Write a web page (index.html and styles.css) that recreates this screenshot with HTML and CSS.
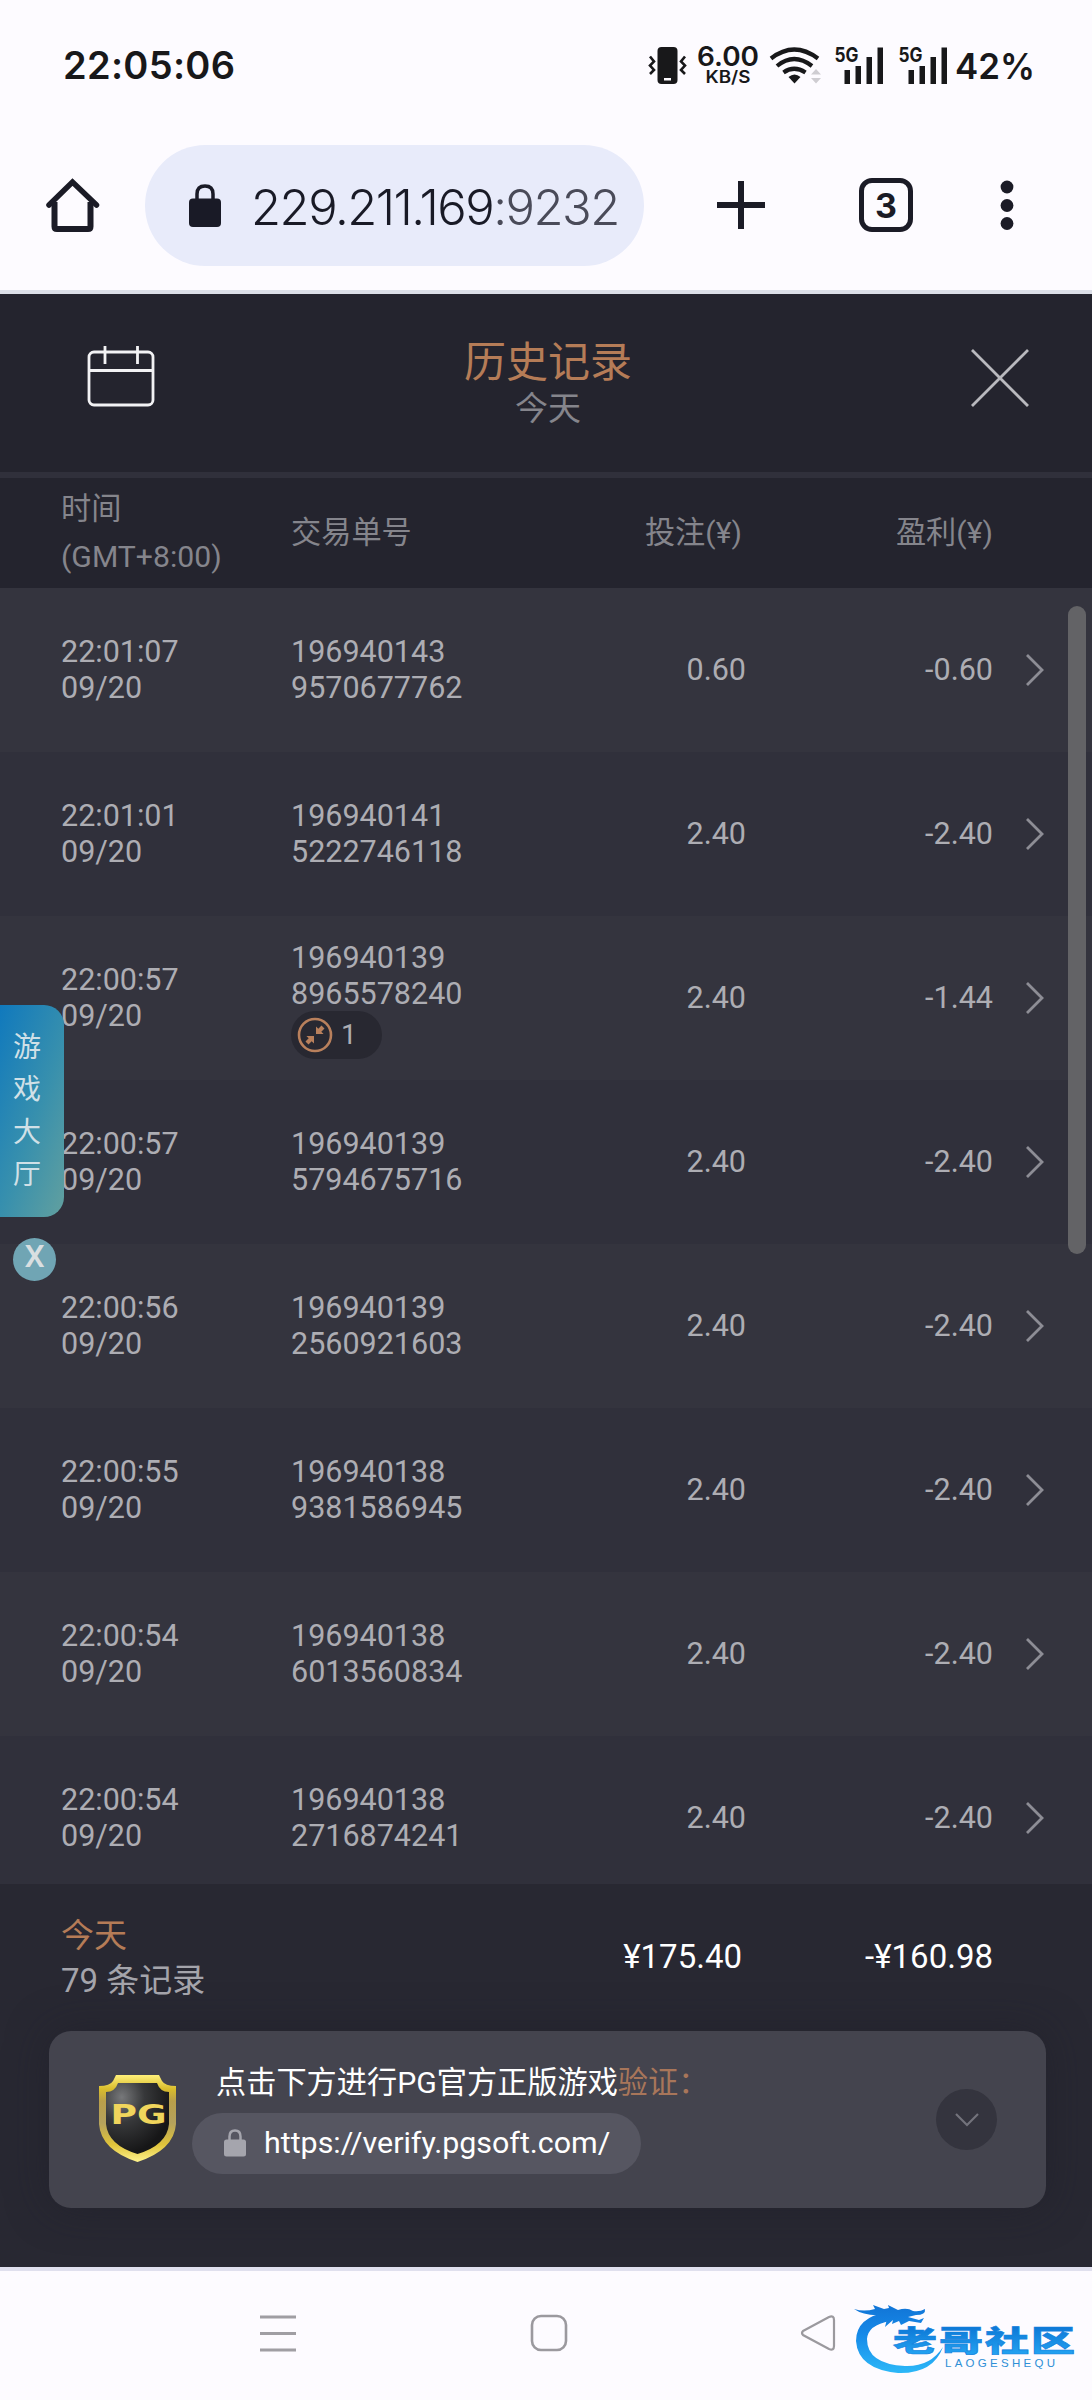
FILE: index.html
```html
<!DOCTYPE html>
<html lang="zh-CN">
<head>
<meta charset="utf-8">
<title>历史记录</title>
<link rel="stylesheet" href="styles.css">
</head>
<body>
<svg class="defs" width="0" height="0" aria-hidden="true">
  <symbol id="chev" viewBox="0 0 20 34"><path d="M2 2 17 17 2 32" fill="none" stroke="#8d8d95" stroke-width="2.800"/></symbol>
</svg>
<div class="phone">
  <header class="status">
    <span class="clock">22:05:06</span>
    <svg class="status-icons" width="392" height="50" viewBox="646 40 392 50">
      <g fill="#18181a">
        <rect x="657.500" y="47" width="20" height="37" rx="4"/>
        <rect x="664" y="78" width="7" height="2.500" fill="#fdfbff"/>
        <path d="M650 56.500l4 5-4 4 4 4.500-4 4M685 56.500l-4 5 4 4-4 4.500 4 4" fill="none" stroke="#18181a" stroke-width="2.600"/>
        <text x="697" y="66" font-size="27" font-weight="600" textLength="62" lengthAdjust="spacingAndGlyphs">6.00</text>
        <text x="705.500" y="83" font-size="17" font-weight="600" textLength="45" lengthAdjust="spacingAndGlyphs">KB/S</text>
        <g fill="none" stroke="#18181a" stroke-width="4.200">
          <path d="M771 58.500Q794 40.500 818 58.500"/><path d="M777 66Q794 52 812 66"/><path d="M783.500 72.500Q794 65 805.500 72.500"/>
        </g>
        <path d="M788.500 77q6-5 12 0l-6 6.500z"/>
        <path d="M811 74.500l5-5.500 5 5.500zM811 78h10l-5 5.500z" fill="#cfcdd2"/>
        <text x="834.500" y="62" font-size="20" font-weight="700" textLength="24" lengthAdjust="spacingAndGlyphs">5G</text>
        <path d="M844.500 70h5.500v14h-5.500zM855.500 66h5.500v18h-5.500zM866.500 57h5.500v27h-5.500zM877.500 47.500h5.500v36.500h-5.500z"/>
        <text x="898.500" y="62" font-size="20" font-weight="700" textLength="24" lengthAdjust="spacingAndGlyphs">5G</text>
        <path d="M908.500 70h5.500v14h-5.500zM919.500 66h5.500v18h-5.500zM930.500 57h5.500v27h-5.500zM941.500 47.500h5.500v36.500h-5.500z"/>
        <text x="955" y="79" font-size="36" font-weight="600" textLength="80" lengthAdjust="spacingAndGlyphs">42%</text>
      </g>
    </svg>
  </header>

  <nav class="browser">
    <svg class="home" width="56" height="56" viewBox="0 0 56 56"><g fill="none" stroke="#1b1b26" stroke-width="6"><path d="M9.500 25V49.500Q9.500 52 12 52H43Q45.500 52 45.500 49.500V25"/><path d="M4 28 27.500 5 51.500 28" stroke-width="5.500" stroke-linecap="round"/></g></svg>
    <div class="url">
      <svg width="34" height="44" viewBox="0 0 34 44"><path d="M9 18v-8q0-8 8-8t8 8v8" fill="none" stroke="#191a26" stroke-width="3.500"/><rect x="1" y="14.500" width="32" height="28.500" rx="4" fill="#191a26"/></svg>
      <span class="url-text">229.211.169<span class="port">:9232</span></span>
    </div>
    <svg class="plus" width="50" height="50" viewBox="0 0 50 50"><path d="M25 1v48M1 25h48" stroke="#1b1b26" stroke-width="6"/></svg>
    <div class="tabs">3</div>
    <svg class="dots" width="14" height="52" viewBox="0 0 14 52"><g fill="#1b1b26"><circle cx="7" cy="8" r="6.400"/><circle cx="7" cy="26.500" r="6.400"/><circle cx="7" cy="44.500" r="6.400"/></g></svg>
  </nav>

  <main class="app">
    <div class="title-bar">
      <svg class="cal" width="68" height="62" viewBox="0 0 68 62"><g fill="none" stroke="#f2f2f4" stroke-width="2.800"><rect x="2" y="7" width="64" height="53" rx="5"/><path d="M2 25.500h64M18 1v18M50.500 1v18"/></g></svg>
      <div class="titles"><h1>历史记录</h1><p>今天</p></div>
      <svg class="close" width="58" height="58" viewBox="0 0 58 58"><path d="M1 1 57 57M57 1 1 57" stroke="#b9b9be" stroke-width="2.800"/></svg>
    </div>
    <div class="cols heads">
      <div>时间<br>(GMT+8:00)</div><div>交易单号</div><div class="num">投注(¥)</div><div class="num">盈利(¥)</div>
    </div>
    <div class="list">
      <div class="cols row"><div>22:01:07<br>09/20</div><div>196940143<br>9570677762</div><div class="num bet">0.60</div><div class="num">-0.60</div><svg class="chev"><use href="#chev"/></svg></div>
      <div class="cols row"><div>22:01:01<br>09/20</div><div>196940141<br>5222746118</div><div class="num bet">2.40</div><div class="num">-2.40</div><svg class="chev"><use href="#chev"/></svg></div>
      <div class="cols row"><div>22:00:57<br>09/20</div><div class="tagged">196940139<br>8965578240
        <div class="badge"><svg width="36" height="36" viewBox="0 0 36 36"><circle cx="18" cy="18" r="16" fill="none" stroke="#b9805c" stroke-width="2.600"/><path d="M19 17V9.500l2.300 2.300L24.500 8.500l3 3-3.200 3.200L26.600 17zM17 19v7.500l-2.300-2.300L11.500 27.500l-3-3 3.200-3.200L9.400 19z" fill="#b9805c"/></svg><span>1</span></div></div><div class="num bet">2.40</div><div class="num">-1.44</div><svg class="chev"><use href="#chev"/></svg></div>
      <div class="cols row"><div>22:00:57<br>09/20</div><div>196940139<br>5794675716</div><div class="num bet">2.40</div><div class="num">-2.40</div><svg class="chev"><use href="#chev"/></svg></div>
      <div class="cols row"><div>22:00:56<br>09/20</div><div>196940139<br>2560921603</div><div class="num bet">2.40</div><div class="num">-2.40</div><svg class="chev"><use href="#chev"/></svg></div>
      <div class="cols row"><div>22:00:55<br>09/20</div><div>196940138<br>9381586945</div><div class="num bet">2.40</div><div class="num">-2.40</div><svg class="chev"><use href="#chev"/></svg></div>
      <div class="cols row"><div>22:00:54<br>09/20</div><div>196940138<br>6013560834</div><div class="num bet">2.40</div><div class="num">-2.40</div><svg class="chev"><use href="#chev"/></svg></div>
      <div class="cols row"><div>22:00:54<br>09/20</div><div>196940138<br>2716874241</div><div class="num bet">2.40</div><div class="num">-2.40</div><svg class="chev"><use href="#chev"/></svg></div>
      <div class="scrollbar"></div>
    </div>
    <div class="footer">
      <div class="cols sums">
        <div class="count"><span class="accent">今天</span><br>79 条记录</div><div class="num total">¥175.40</div><div class="num total">-¥160.98</div>
      </div>
      <section class="verify">
        <svg class="shield" width="80" height="90" viewBox="0 0 80 90">
          <defs>
            <linearGradient id="gold" x1="0" y1="0" x2="0" y2="1"><stop offset="0" stop-color="#fff07a"/><stop offset=".16" stop-color="#d9bd2c"/><stop offset=".3" stop-color="#b99f4a"/><stop offset=".55" stop-color="#b5a25c"/><stop offset=".8" stop-color="#e0c43a"/><stop offset="1" stop-color="#fff38e"/></linearGradient>
            <radialGradient id="coal" cx=".25" cy=".2" r=".8"><stop offset="0" stop-color="#77787a"/><stop offset=".45" stop-color="#37383a"/><stop offset="1" stop-color="#161617"/></radialGradient>
          </defs>
          <path d="M18 1H61L64 7Q67 12 78 12V50Q76 76 39.500 88Q3 76 1 50V12Q12 12 15 7Z" fill="url(#gold)"/>
          <path d="M20 9H59Q62 18 71 18V50Q69 71 39.500 80Q10 71 8 50V18Q17 18 20 9Z" fill="url(#coal)"/>
          <text x="12.500" y="50" textLength="56" lengthAdjust="spacingAndGlyphs">PG</text>
        </svg>
        <div class="verify-body">
          <div class="verify-title">点击下方进行PG官方正版游戏<span class="accent">验证：</span></div>
          <div class="link"><svg width="24" height="28" viewBox="0 0 24 28"><path d="M6.500 12V7.500q0-6 5.500-6t5.500 6V12" fill="none" stroke="#a5a5ad" stroke-width="2.500"/><rect x="1" y="10.500" width="22" height="17" rx="2.500" fill="#a5a5ad"/></svg><span>https://verify.pgsoft.com/</span></div>
        </div>
        <div class="fold"><svg width="26" height="16" viewBox="0 0 26 16"><path d="M2 2 13 13 24 2" fill="none" stroke="#73737c" stroke-width="2.200"/></svg></div>
      </section>
    </div>
    <aside class="lobby"><span>游</span><span>戏</span><span>大</span><span>厅</span></aside>
    <div class="lobby-close">X</div>
  </main>

  <footer class="sysnav">
    <svg width="36" height="38" viewBox="0 0 36 38"><path d="M0 3h36M0 19.500h36M0 36h36" stroke="#a09ea3" stroke-width="3.200"/></svg>
    <svg width="38" height="38" viewBox="0 0 38 38"><rect x="2" y="2" width="34" height="34" rx="9" fill="none" stroke="#9b999e" stroke-width="2.600"/></svg>
    <svg width="36" height="38" viewBox="0 0 36 38"><path d="M3 17 29 3Q34 1 34 6V32Q34 37 29 35L3 21Q1 19 3 17Z" fill="none" stroke="#9b999e" stroke-width="2.200"/></svg>
    <svg class="mark" width="240" height="84" viewBox="845 2299 240 84">
      <defs>
        <linearGradient id="sea" gradientUnits="userSpaceOnUse" x1="0" y1="2308" x2="0" y2="2373"><stop offset="0" stop-color="#1277d8"/><stop offset=".4" stop-color="#1689e8"/><stop offset="1" stop-color="#2cb8f8"/></linearGradient>
        <linearGradient id="ink" x1="0" y1="0" x2="0" y2="1"><stop offset=".15" stop-color="#0b74d4"/><stop offset=".95" stop-color="#27a9f5"/></linearGradient>
      </defs>
      <path d="M888 2312Q856 2317 856 2341Q858 2369 898 2373Q933 2374 943 2347Q930 2367 905 2366Q867 2364 867 2339Q868 2325 890 2321Z" fill="url(#sea)"/>
      <path d="M854 2309Q864 2312 875 2309L873 2305L884 2309L889 2308L888 2305L898 2310Q907 2307 913 2311Q920 2312 925 2309Q926 2315 916 2315L908 2317L919 2320L924 2318L921 2323L909 2321L901 2325L899 2321L892 2324L893 2320L885 2327L887 2319L876 2321L881 2315Q864 2316 854 2309Z" fill="url(#sea)"/>
      <text class="mark-cn" transform="translate(893 2352) scale(1 .66)" textLength="182" x="0" y="0" fill="url(#ink)" stroke="#1583de" stroke-width="1">老哥社区</text>
      <text class="mark-en" x="945" y="2366.500" textLength="110">LAOGESHEQU</text>
    </svg>
  </footer>
</div>
</body>
</html>
```

FILE: styles.css
```css
* { box-sizing: border-box; }
body { margin: 0; background: #fdfbff; font-family: Roboto, "Noto Sans CJK SC", sans-serif; }
svg { display: block; flex: none; }
.defs { position: absolute; }
.phone { width: 1092px; height: 2400px; display: flex; flex-direction: column; overflow: hidden; }

.status { height: 130px; padding: 0 54px 0 63px; display: flex; justify-content: space-between; align-items: center; font-family: Inter, sans-serif; }
.clock { font-size: 38px; font-weight: 600; color: #18181a; letter-spacing: 0.3px; }
.status-icons { font-family: Inter, sans-serif; }

.browser { height: 164px; padding: 15px 0 0 45px; display: flex; align-items: flex-start; border-bottom: 4px solid #dcdfe8; }
.home { margin-top: 32px; }
.url { width: 499px; height: 121px; margin-left: 44px; padding-left: 43px; border-radius: 61px; background: #e8ebfa; display: flex; align-items: center; gap: 29px; }
.url-text { font-family: Inter, sans-serif; font-size: 49px; font-weight: 350; color: #191a26; letter-spacing: -1.5px; white-space: nowrap; padding-top: 4px; }
.port { color: #4a4b59; }
.plus { margin: 35px 0 0 72px; }
.tabs { width: 54px; height: 54px; margin: 33px 0 0 93px; border: 5.5px solid #1b1b26; border-radius: 13px; display: flex; align-items: center; justify-content: center; font: 700 34px Inter, sans-serif; color: #1b1b26; }
.dots { margin: 34px 0 0 87px; }

.app { position: relative; height: 1973px; background: #24242e; }
.title-bar { height: 184px; padding: 0 62px 0 87px; display: grid; grid-template-columns: 68px 1fr 58px; border-bottom: 6px solid #30303b; }
.cal { margin-top: 51px; }
.titles { margin-right: 31px; text-align: center; color: #85858c; }
.titles h1 { margin: 44px 0 0; font-size: 42px; line-height: 50px; font-weight: 400; color: #b57c57; }
.titles p { margin: 0; font-size: 33px; line-height: 42px; }
.close { margin: 55px 0 0 -1px; }

.cols { display: grid; grid-template-columns: 230px 251px 200px 251px 1fr; padding-left: 61px; align-items: center; }
.num { text-align: right; }
.heads { height: 110px; font-size: 30.2px; line-height: 48px; color: #85858c; }
.list { position: relative; height: 1296px; overflow: hidden; color: #adadb3; }
.row { height: 164px; font-size: 30.5px; line-height: 36px; background: #34343e; }
.row:nth-child(even) { background: #30303b; }
.bet { margin-right: -4px; }
.chev { width: 20px; height: 34px; margin-left: 32px; }
.tagged { padding-top: 2px; }
.badge { width: 91px; height: 48px; margin-top: -1px; padding-left: 6px; border-radius: 24px; background: #282831; display: flex; align-items: center; gap: 8px; font-size: 28px; }
.scrollbar { position: absolute; left: 1068px; top: 18px; width: 18px; height: 648px; border-radius: 9px; background: #636366; }

.footer { height: 383px; background: #282832; }
.sums { height: 147px; grid-template-columns: 481px 200px 251px 1fr; color: #a4a4ab; font-size: 33px; line-height: 45px; }
.total { color: #fff; font-size: 33px; padding-bottom: 2px; }
.accent { color: #b57c57; }
.verify { width: 997px; height: 177px; margin-left: 49px; padding-left: 49px; border-radius: 22px; background: #44444e; box-shadow: 0 0 40px #1e1e2780; display: flex; }
.shield { margin-top: 43px; }
.shield text { font: 700 27px "DejaVu Sans", sans-serif; fill: #f0d55c; }
.verify-body { margin-left: 14px; width: 744px; padding-top: 32px; color: #fff; }
.verify-title { padding-left: 24px; height: 50px; font-size: 30.2px; line-height: 40px; white-space: nowrap; }
.verify-title .accent { color: #a8765a; }
.link { width: 449px; height: 61px; padding: 0 0 2px 31px; border-radius: 31px; background: #565661; display: flex; align-items: center; gap: 17px; font-size: 30.4px; white-space: nowrap; }
.fold { width: 61px; height: 61px; margin-top: 58px; border-radius: 50%; background: #34343e; display: flex; align-items: center; justify-content: center; }

.lobby { position: absolute; left: 0; top: 711px; width: 64px; height: 212px; padding: 22px 10px 0 13px; border-radius: 0 20px 20px 0; background: linear-gradient(110deg, #1079bd, #3890ad 55%, #62a09f); color: #d0e0e7; font-size: 28px; line-height: 42.3px; display: flex; flex-direction: column; }
.lobby-close { position: absolute; left: 13px; top: 944px; width: 43px; height: 43px; border-radius: 50%; background: #70a5b4; color: #d9dfe1; text-align: center; font-size: 32px; font-weight: 500; line-height: 37px; }

.sysnav { position: relative; height: 133px; border-top: 4px solid #e0e0ee; padding: 43px 0 0 260px; display: flex; }
.sysnav svg:nth-child(2) { margin-left: 234px; }
.sysnav svg:nth-child(3) { margin-left: 232px; }
.mark { position: absolute; left: 845px; top: 28px; }
.mark-cn { font: 900 44px "Noto Sans CJK SC", sans-serif; }
.mark-en { font: 400 11.5px "Liberation Sans", sans-serif; fill: #2f8fd6; }
```
